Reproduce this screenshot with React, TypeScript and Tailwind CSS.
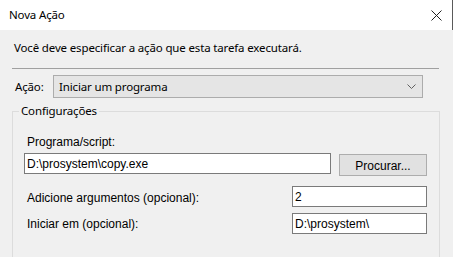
export default function App() {
  const ui = { fontFamily: '"Noto Sans", "Open Sans", sans-serif' };
  const ms = { fontFamily: '"Liberation Sans", Arial, sans-serif' };

  return (
    <div className="h-[257px] w-[453px] overflow-hidden bg-[#f0f0f0] text-[11.5px] tracking-[-0.15px] text-black" style={ui}>
      {/* title bar */}
      <div className="flex h-[30px] items-center justify-between border-r border-[#5a5a5a] bg-white pl-[9px] pr-[10px]">
        <span className="leading-[16px]">Nova Ação</span>
        <svg width="11" height="11" viewBox="0 0 11 11" className="text-[#222]">
          <path d="M0.5 0.5 L10.5 10.5 M10.5 0.5 L0.5 10.5" stroke="currentColor" strokeWidth="1" fill="none" />
        </svg>
      </div>

      <div className="px-[12px]">
        <p className="ml-[2px] pt-[10px] leading-[16px]">Você deve especificar a ação que esta tarefa executará.</p>
        <div className="mt-[12px] h-px w-[427px] bg-[#a0a0a0]" />

        <div className="mt-[6px] flex items-center">
          <span className="ml-[3px] w-[38px] leading-[16px]">Ação:</span>
          <div className="flex h-[23px] w-[370px] items-center justify-between border border-[#acacac] bg-[#e5e5e5] pl-[5px] pr-[6px]">
            <span className="leading-[16px]">Iniciar um programa</span>
            <svg width="9" height="5" viewBox="0 0 9 5">
              <path d="M0.5 0.5 L4.5 4.5 L8.5 0.5" stroke="#606060" strokeWidth="1" fill="none" />
            </svg>
          </div>
        </div>

        <div className="mt-[13px] h-[160px] w-[428px] border border-[#dcdcdc] pl-[11px]">
          <div className="-ml-[5px] -mt-[9px] w-fit bg-[#f0f0f0] px-[2px] leading-[16px]">Configurações</div>

          <div className="text-[12px] tracking-normal" style={ms}>
            <div className="ml-[3px] mt-[15px] leading-[16px]">Programa/script:</div>
            <div className="mt-[3px] flex items-start">
              <div className="flex h-[21px] w-[307px] items-center border border-[#7a7a7a] bg-white pl-[2px]">
                D:\prosystem\copy.exe
              </div>
              <button className="ml-[8px] mt-[1px] h-[22px] w-[88px] border border-[#adadad] bg-[#e1e1e1] pt-[2px] text-center">
                Procurar...
              </button>
            </div>

            <div className="mt-[10px] flex items-center">
              <span className="ml-[3px] w-[265px] pt-[3px] leading-[16px]">Adicione argumentos (opcional):</span>
              <div className="flex h-[21px] w-[135px] items-center border border-[#7a7a7a] bg-white pl-[2px]">2</div>
            </div>

            <div className="mt-[6px] flex items-center">
              <span className="ml-[3px] w-[265px] pt-[1px] leading-[16px]">Iniciar em (opcional):</span>
              <div className="flex h-[21px] w-[135px] items-center border border-[#7a7a7a] bg-white pl-[2px]">D:\prosystem\</div>
            </div>
          </div>
        </div>
      </div>
    </div>
  );
}
